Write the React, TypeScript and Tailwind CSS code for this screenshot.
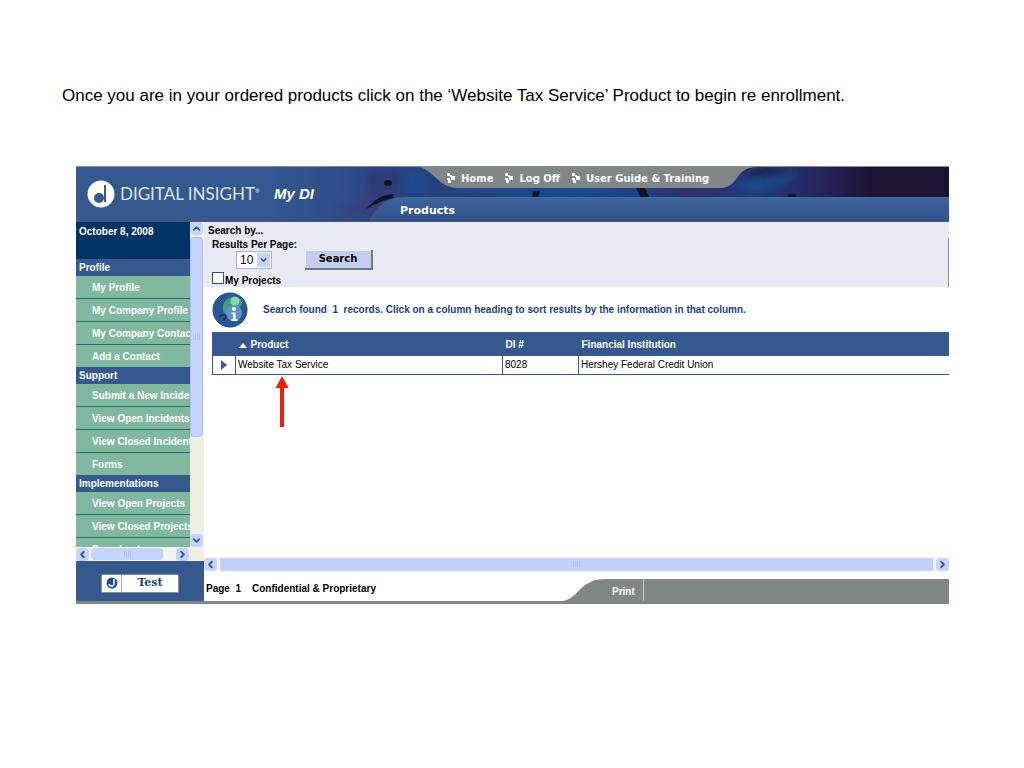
import { ChevronDown, ChevronLeft, ChevronRight, ChevronUp } from "lucide-react";

type MenuGroup = {
  title: string;
  items: string[];
};

const menu: MenuGroup[] = [
  { title: "Profile", items: ["My Profile", "My Company Profile", "My Company Contact", "Add a Contact"] },
  { title: "Support", items: ["Submit a New Incident", "View Open Incidents", "View Closed Incidents", "Forms"] },
  { title: "Implementations", items: ["View Open Projects", "View Closed Projects", "Download"] },
];

const topLinks = ["Home", "Log Off", "User Guide & Training"];

const products = [{ name: "Website Tax Service", di: "8028", institution: "Hershey Federal Credit Union" }];

function HeaderArt() {
  return (
    <svg className="absolute left-0 top-0" width="873" height="55" viewBox="0 0 873 55" aria-hidden="true">
      <defs>
        <linearGradient id="photo" x1="0" x2="1" y1="0" y2="0">
          <stop offset="0" stopColor="#35588f" />
          <stop offset="0.22" stopColor="#35588f" />
          <stop offset="0.3" stopColor="#2f4d88" />
          <stop offset="0.36" stopColor="#2b4582" />
          <stop offset="0.42" stopColor="#27417e" />
          <stop offset="0.55" stopColor="#174a8a" />
          <stop offset="0.64" stopColor="#1d4485" />
          <stop offset="0.7" stopColor="#302d6b" />
          <stop offset="0.78" stopColor="#223c7c" />
          <stop offset="0.86" stopColor="#252257" />
          <stop offset="0.91" stopColor="#1b1433" />
          <stop offset="1" stopColor="#1b1433" />
        </linearGradient>
        <linearGradient id="band" x1="0" x2="0" y1="0" y2="1">
          <stop offset="0" stopColor="#3f689f" />
          <stop offset="0.5" stopColor="#35588f" />
          <stop offset="1" stopColor="#33568f" />
        </linearGradient>
        <filter id="soft" x="-20%" y="-20%" width="140%" height="140%">
          <feGaussianBlur stdDeviation="4" />
        </filter>
      </defs>
      <rect width="873" height="55" fill="url(#photo)" />
      <g filter="url(#soft)">
        <path d="M262 50C275 40 290 28 312 30L296 50Z" fill="#3a3c78" />
        <path d="M290 6h34v22h-34z" fill="#2f3a76" />
        <path d="M330 3h20v28h-20z" fill="#1e4c8d" />
        <path d="M658 20q30-10 66-14-10 12-46 18z" fill="#1d5090" />
        <path d="M675 4h50l-30 7h-26z" fill="#19122e" />
      </g>
      <ellipse cx="312" cy="17" rx="4" ry="3" fill="#12132a" />
      <path d="M290 43q13-15 28-15l-1 4q-13 3-27 11z" fill="#14142c" />
      <path d="M457 25h7l-2 7h-6zM560 22h9l5 10h-9zM712 28h8v3h-8z" fill="#121331" />
      <path d="M336 0C358 0 360 22 382 22H644C664 22 658 1 681 1H873V0Z" fill="#7f8789" />
      <path d="M0 0H873V1H0Z" fill="#8a8c86" />
      <path d="M293 55C300 42 308 31 330 31H873V55Z" fill="url(#band)" />
    </svg>
  );
}

function Logo() {
  return (
    <svg width="28" height="28" viewBox="0 0 28 28" aria-hidden="true">
      <circle cx="14" cy="14" r="13.5" fill="#fff" />
      <circle cx="12" cy="18" r="5" fill="#35588f" />
      <path d="M17 5h2v17h-2z" fill="#35588f" />
    </svg>
  );
}

function DotArrow() {
  return (
    <svg width="8" height="10" viewBox="0 0 8 10" fill="#fff" aria-hidden="true">
      <path d="M0 0h3v3H0zM3 2h2v2H3zM4 3h4v4H4zM0 5h3v2H0zM1 7h3v3H1z" />
    </svg>
  );
}

function InfoBadge() {
  return (
    <svg width="36" height="36" viewBox="0 0 36 36" aria-hidden="true">
      <circle cx="18" cy="18" r="17" fill="#2a5796" stroke="#1f4379" />
      <path d="M11 14C12 7 20 3 27 6c4 2 4 7 1 9l-6 2-6 5c-4 1-6-3-5-8z" fill="#3f9d86" />
      <circle cx="23" cy="9" r="4.5" fill="#8fd3a8" />
      <circle cx="22" cy="21" r="8" fill="#5c92c4" />
      <circle cx="22" cy="17" r="2" fill="#fff" />
      <path d="M19.5 20.500h4V27h2v2h-6v-2h1.500v-5h-1.500z" fill="#fff" />
      <path d="M7 25q4-4 7-1 0 3-3 4" fill="none" stroke="#123a4a" strokeWidth="1.5" />
    </svg>
  );
}

type ScrollButtonProps = {
  label: string;
  icon: typeof ChevronUp;
};

function ScrollButton({ label, icon: Icon }: ScrollButtonProps) {
  return (
    <button
      type="button"
      aria-label={label}
      className="flex h-[13px] w-[13px] shrink-0 items-center justify-center rounded-sm bg-[#c5d4fb] text-[#42587f]"
    >
      <Icon size={11} strokeWidth={4} />
    </button>
  );
}

function Grip() {
  return (
    <span className="flex gap-px">
      {[0, 1, 2, 3].map((n) => (
        <span key={n} className="h-1.5 w-px bg-[#b3c4f2]" />
      ))}
    </span>
  );
}

function Header() {
  return (
    <header className="relative flex h-14 border-b border-[#4b5672] bg-[linear-gradient(#1b1433_31px,#35588f_31px)] text-white">
      <HeaderArt />
      <div className="relative flex w-[324px] shrink-0 items-center pl-[11px]">
        <Logo />
        <span className="ml-[5px] font-['Lato'] text-[17px] text-[#dde5f1]">DIGITAL INSIGHT</span>
        <sup className="text-[6px]">®</sup>
        <span className="ml-auto mr-[86px] pt-0.5 text-[15px] font-bold italic">My DI</span>
      </div>
      <div className="relative flex flex-col justify-between font-['DejaVu_Sans'] font-bold">
        <nav className="flex h-6 items-center gap-3 pl-[47px] text-[10px]">
          {topLinks.map((link) => (
            <a key={link} href="#" className="flex items-center gap-1.5">
              <DotArrow />
              {link}
            </a>
          ))}
        </nav>
        <h1 className="h-5 text-[11px] leading-5">Products</h1>
      </div>
    </header>
  );
}

function Sidebar() {
  return (
    <aside className="flex w-32 shrink-0 flex-col">
      <div className="flex h-[339px] bg-[#f1efe2]">
        <div className="flex w-[114px] flex-col">
          <div className="flex-1 basis-0 overflow-hidden whitespace-nowrap text-[10px] font-bold text-white">
            <p className="h-[37px] bg-[#003366] pl-[3px] leading-5">October 8, 2008</p>
            {menu.map((group) => (
              <section key={group.title}>
                <h2 className="h-[17px] bg-[#35588f] pl-[3px] leading-[18px]">{group.title}</h2>
                <ul className="divide-y divide-[#2b6a70] bg-[#80b99f]">
                  {group.items.map((item) => (
                    <li key={item} className="h-[23px] last:h-[22px]">
                      <a href="#" className="block pl-4 leading-6">
                        {item}
                      </a>
                    </li>
                  ))}
                </ul>
              </section>
            ))}
          </div>
          <div className="flex h-3.5 items-center bg-[#f4f3ee]">
            <ScrollButton label="Scroll left" icon={ChevronLeft} />
            <div className="ml-0.5 flex h-3 w-[72px] items-center justify-center rounded-sm bg-[#c5d4fb]">
              <Grip />
            </div>
            <div className="ml-auto mr-px flex">
              <ScrollButton label="Scroll right" icon={ChevronRight} />
            </div>
          </div>
        </div>
        <div className="flex flex-1 flex-col items-center border-r border-[#eef0f6]">
          <ScrollButton label="Scroll up" icon={ChevronUp} />
          <div className="mt-0.5 flex h-[200px] w-[13px] items-center justify-center rounded-sm border border-[#aebff0] bg-[#c5d4fb]">
            <Grip />
          </div>
          <div className="mb-[14px] mt-auto flex">
            <ScrollButton label="Scroll down" icon={ChevronDown} />
          </div>
        </div>
      </div>
      <div className="flex h-10 items-center justify-center bg-[#35588f] pt-1">
        <button
          type="button"
          className="flex h-[19px] w-[78px] items-center border border-[#8b8b94] bg-white text-[#1c4275]"
        >
          <span className="flex h-full w-5 items-center justify-center border-r border-[#b9a58f]">
            <svg width="12" height="12" viewBox="0 0 12 12" aria-hidden="true">
              <circle cx="6" cy="6" r="5.5" fill="#1c4f8b" />
              <path d="M3 7a2.500 2.500 0 1 0 5-1V2" fill="none" stroke="#fff" strokeWidth="1.5" />
            </svg>
          </span>
          <span className="flex-1 font-['DejaVu_Serif'] text-[11px] font-bold leading-4">Test</span>
        </button>
      </div>
    </aside>
  );
}

function SearchForm() {
  return (
    <form className="flex h-[65px] justify-between bg-[#e7eaf3] pl-1 text-[10px] font-bold leading-[14px]">
      <div className="pt-0.5">
        <p>Search by...</p>
        <div className="flex">
          <div className="w-[97px] pl-1">
            <label htmlFor="per-page" className="block whitespace-nowrap">
              Results Per Page:
            </label>
            <div className="relative -mt-px ml-6 w-9">
              <select
                id="per-page"
                className="block h-[18px] w-full appearance-none border border-[#a9b9d6] bg-white pl-[3px] text-xs font-normal leading-4"
              >
                <option>10</option>
                <option>25</option>
              </select>
              <ChevronDown
                size={13}
                strokeWidth={4}
                className="pointer-events-none absolute right-0.5 top-0.5 h-3.5 bg-[#c5d4fb] p-0.5 text-[#42587f]"
              />
            </div>
          </div>
          <button
            type="button"
            className="mt-3 h-5 w-[68px] border-b-2 border-r-2 border-[#77797f] bg-[#c3cff0] font-['DejaVu_Sans'] shadow-[inset_1px_1px_#e9eeff]"
          >
            Search
          </button>
        </div>
        <div className="mt-0.5 flex items-end gap-px pl-1">
          <input
            id="my-projects"
            type="checkbox"
            className="mb-1 h-3 w-3 appearance-none border border-[#2b5584] bg-white"
          />
          <label htmlFor="my-projects">My Projects</label>
        </div>
      </div>
      <span className="mt-4 w-px bg-[#8d929c]" />
    </form>
  );
}

function ProductTable() {
  return (
    <table className="w-full table-fixed border-collapse border-b border-l border-[#35588f] text-left text-[10px] leading-4">
      <colgroup>
        <col className="w-[23px]" />
        <col className="w-[267px]" />
        <col className="w-[76px]" />
        <col />
      </colgroup>
      <thead className="bg-[#35588f] text-white">
        <tr className="h-6">
          <th />
          <th className="pl-[3px] pt-0.5">
            <span className="flex items-center gap-1">
              <svg width="8" height="5" viewBox="0 0 8 5" aria-hidden="true">
                <path d="M4 0l4 5H0z" fill="#fff" />
              </svg>
              Product
            </span>
          </th>
          <th className="pl-[3px] pt-0.5">DI #</th>
          <th className="pl-[3px] pt-0.5">Financial Institution</th>
        </tr>
      </thead>
      <tbody>
        {products.map((product) => (
          <tr key={product.di} className="h-[18px] divide-x divide-[#35588f]">
            <td>
              <svg className="mx-auto" width="6" height="10" viewBox="0 0 6 10" aria-hidden="true">
                <path d="M0 0l6 5-6 5z" fill="#35588f" />
              </svg>
            </td>
            <td className="pl-0.5 pt-px">
              <a href="#">{product.name}</a>
            </td>
            <td className="pl-0.5 pt-px">{product.di}</td>
            <td className="pl-0.5 pt-px">{product.institution}</td>
          </tr>
        ))}
      </tbody>
    </table>
  );
}

function Footer() {
  return (
    <footer className="flex h-[22px] items-start text-[10px] font-bold">
      <p className="w-[358px] shrink-0 pl-0.5 leading-5">
        <span className="mr-[11px] whitespace-pre">Page  1</span>
        Confidential & Proprietary
      </p>
      <svg width="44" height="22" viewBox="0 0 44 22" className="shrink-0" aria-hidden="true">
        <path d="M0 22C18 20 16 0 44 0V22H0Z" fill="#7f8789" />
      </svg>
      <div className="flex h-full flex-1 bg-[#7f8789] text-white">
        <a href="#" className="w-[38px] border-r border-[#c3c7c8] pl-1.5 leading-[26px]">
          Print
        </a>
      </div>
    </footer>
  );
}

export default function App() {
  return (
    <div className="min-h-screen bg-white pl-[76px] pr-[75px] pt-[84px] font-['Liberation_Sans',sans-serif] text-black">
      <p className="-ml-3.5 text-[17px] leading-6">
        Once you are in your ordered products click on the ‘Website Tax Service’ Product to begin re enrollment.
      </p>
      <div className="mt-[58px]">
        <Header />
        <div className="flex border-b-3 border-[#7f8789]">
          <Sidebar />
          <main className="flex min-w-0 flex-1 flex-col">
            <SearchForm />
            <div className="flex-1 pl-2">
              <div className="flex h-[45px] items-center gap-[15px] text-[10px] font-bold text-[#1c4275]">
                <InfoBadge />
                <p className="whitespace-pre">
                  Search found  1  records. Click on a column heading to sort results by the information in that column.
                </p>
              </div>
              <ProductTable />
              <svg className="ml-[63px] mt-px" width="14" height="51" viewBox="0 0 14 51" aria-hidden="true">
                <path d="M7 0l6.5 12H9v39H5V12H.5z" fill="#f01d10" />
              </svg>
            </div>
            <div className="mb-2 flex h-3.5 items-center bg-[#f4f3ee]">
              <ScrollButton label="Scroll left" icon={ChevronLeft} />
              <div className="mx-[3px] flex h-[13px] flex-1 items-center justify-center bg-[#c1d1fa]">
                <Grip />
              </div>
              <ScrollButton label="Scroll right" icon={ChevronRight} />
            </div>
            <Footer />
          </main>
        </div>
      </div>
    </div>
  );
}
